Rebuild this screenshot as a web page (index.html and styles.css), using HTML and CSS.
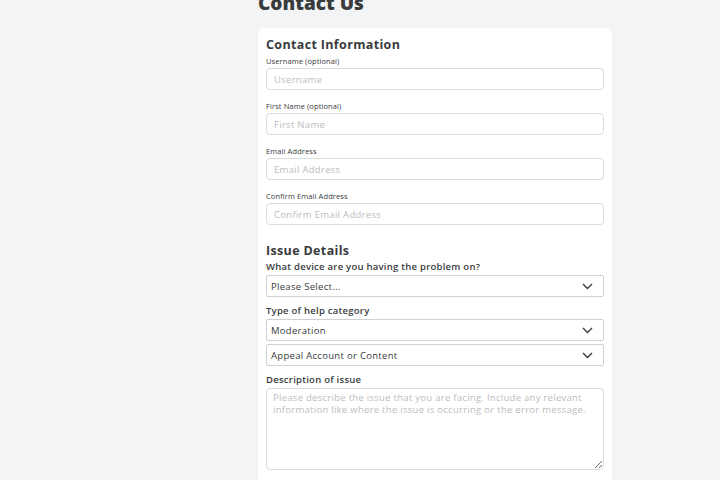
FILE: index.html
```html
<!DOCTYPE html>
<html lang="en">
<head>
<meta charset="utf-8">
<title>Contact Us</title>
<link rel="stylesheet" href="styles.css">
</head>
<body>
<main class="page">
  <h1 class="title">Contact Us</h1>
  <section class="card">
    <h2 class="section-title">Contact Information</h2>
    <div class="field">
      <label class="small-label">Username (optional)</label>
      <input class="text-input" type="text" placeholder="Username">
    </div>
    <div class="field">
      <label class="small-label">First Name (optional)</label>
      <input class="text-input" type="text" placeholder="First Name">
    </div>
    <div class="field">
      <label class="small-label">Email Address</label>
      <input class="text-input" type="text" placeholder="Email Address">
    </div>
    <div class="field">
      <label class="small-label">Confirm Email Address</label>
      <input class="text-input" type="text" placeholder="Confirm Email Address">
    </div>

    <h2 class="section-title issue-title">Issue Details</h2>
    <div class="q-label">What device are you having the problem on?</div>
    <div class="select">
      <span>Please Select...</span>
      <svg class="chev" width="11" height="7" viewBox="0 0 11 7"><path d="M1 1 L5.5 5.5 L10 1" fill="none" stroke="#393b3d" stroke-width="1.4"/></svg>
    </div>
    <div class="q-label q-gap">Type of help category</div>
    <div class="select">
      <span>Moderation</span>
      <svg class="chev" width="11" height="7" viewBox="0 0 11 7"><path d="M1 1 L5.5 5.5 L10 1" fill="none" stroke="#393b3d" stroke-width="1.4"/></svg>
    </div>
    <div class="select select-second">
      <span>Appeal Account or Content</span>
      <svg class="chev" width="11" height="7" viewBox="0 0 11 7"><path d="M1 1 L5.5 5.5 L10 1" fill="none" stroke="#393b3d" stroke-width="1.4"/></svg>
    </div>
    <div class="q-label q-gap">Description of issue</div>
    <textarea class="textarea" placeholder="Please describe the issue that you are facing. Include any relevant information like where the issue is occurring or the error message."></textarea>
  </section>
</main>
</body>
</html>
```

FILE: styles.css
```css
html, body {
  margin: 0;
  padding: 0;
  background: #f2f4f5;
  font-family: "Open Sans", "Noto Sans", sans-serif;
  color: #393b3d;
}
.page {
  width: 354px;
  margin-left: 258px;
}
.title {
  margin: -9px 0 0 0;
  font-size: 19px;
  line-height: 24px;
  font-weight: 800;
  color: #393b3d;
}
.card {
  margin-top: 13px;
  background: #ffffff;
  border-radius: 6px;
  padding: 8px 8px 20px 8px;
  height: 480px;
  box-sizing: border-box;
}
.section-title {
  margin: 0;
  font-size: 12.5px;
  line-height: 17px;
  font-weight: 700;
  letter-spacing: 0.35px;
  color: #393b3d;
}
.field {
  display: flex;
  flex-direction: column;
  margin-top: 10px;
}
.field:first-of-type {
  margin-top: 2px;
}
.small-label {
  font-size: 7.5px;
  line-height: 12px;
  margin-bottom: 1px;
  letter-spacing: 0.1px;
  color: #393b3d;
}
.text-input {
  height: 22px;
  box-sizing: border-box;
  border: 1px solid #dcdddd;
  border-radius: 4px;
  padding: 0 7px;
  font-family: inherit;
  font-size: 9.5px;
  letter-spacing: 0.3px;
  color: #393b3d;
  outline: none;
  width: 100%;
}
.text-input::placeholder {
  color: #bcbdbe;
}
.issue-title {
  margin-top: 17px;
}
.q-label {
  font-size: 9.5px;
  line-height: 16px;
  font-weight: 600;
  letter-spacing: 0.25px;
  color: #393b3d;
}
.q-gap { margin-top: 6px; }
.select {
  height: 22px;
  box-sizing: border-box;
  border: 1px solid #cfd0d1;
  border-radius: 2px;
  display: flex;
  align-items: center;
  justify-content: space-between;
  padding: 0 10px 0 4px;
  font-size: 9.5px;
  letter-spacing: 0.3px;
  color: #393b3d;
}
.select-second { margin-top: 3px; }
.chev { display: block; }
.textarea {
  display: block;
  width: 100%;
  height: 82px;
  box-sizing: border-box;
  border: 1px solid #dcdddd;
  border-radius: 4px;
  padding: 3px 6px;
  font-family: inherit;
  font-size: 9.5px;
  line-height: 12px;
  letter-spacing: 0.28px;
  color: #393b3d;
  outline: none;
  resize: vertical;
}
.textarea::placeholder {
  color: #bcbdbe;
}
```
